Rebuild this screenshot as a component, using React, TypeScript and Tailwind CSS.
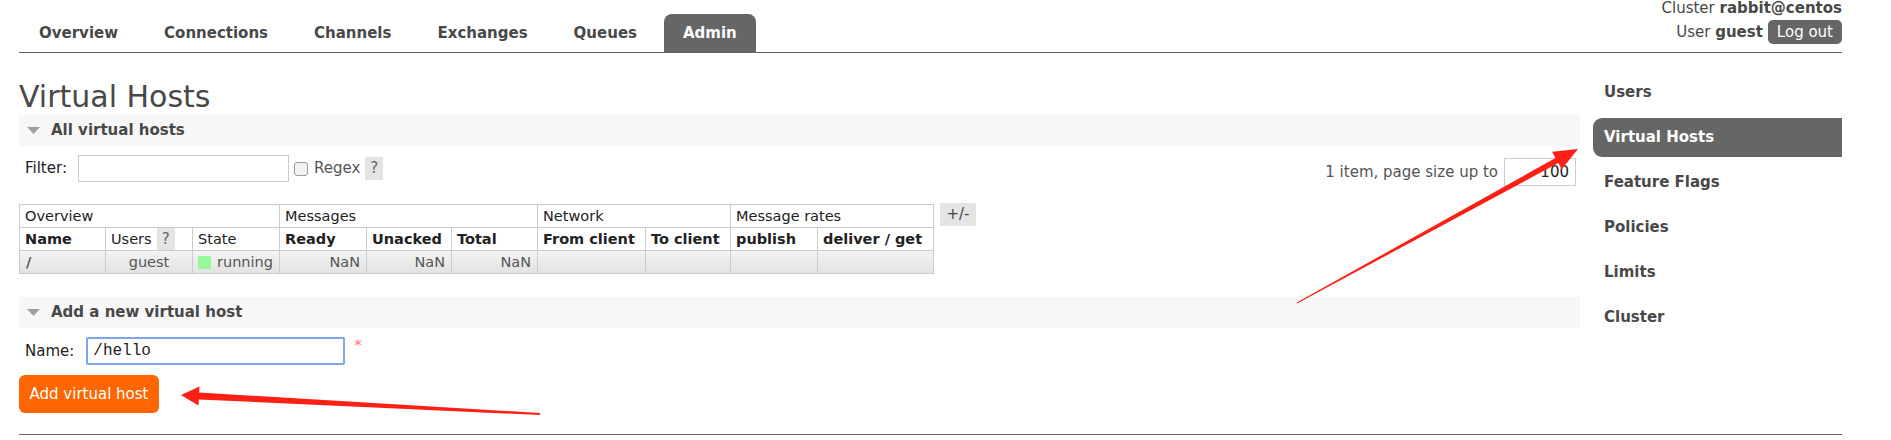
import React from "react";

const TABS = ["Overview", "Connections", "Channels", "Exchanges", "Queues", "Admin"];
const SIDE = ["Users", "Virtual Hosts", "Feature Flags", "Policies", "Limits", "Cluster"];

const TH = "border border-[#ccc] px-[5px] py-0 text-left leading-[20px] whitespace-nowrap";
const TD = "border border-[#ccc] px-[6px] py-0 leading-[20px] whitespace-nowrap text-[#555]";

function Band({ title }: { title: string }) {
  return (
    <div className="flex h-[31px] items-center bg-[#f7f7f7] pl-[8px]">
      <svg width="13" height="7" viewBox="0 0 13 7">
        <path d="M0 0h13L6.5 7z" fill="#a0a0a0" />
      </svg>
      <span className="ml-[11px] text-[15px] font-bold text-[#484848]">{title}</span>
    </div>
  );
}

function Help({ className = "" }: { className?: string }) {
  return (
    <span className={`flex w-[18px] items-center justify-center bg-[#e4e4e4] text-[15px] text-[#666] ${className}`}>?</span>
  );
}

function Arrows() {
  return (
    <svg className="pointer-events-none absolute left-0 top-0" width="1891" height="440" viewBox="0 0 1891 440">
      {/* arrow pointing at Virtual Hosts */}
      <polygon
        fill="#ff1f14"
        points="1296.8,302.6 1555.5,157.9 1552.1,151.7 1578,149 1561.7,169.3 1558.3,163.1 1297.2,303.4"
      />
      {/* arrow pointing at the button */}
      <polygon
        fill="#ff1f14"
        points="540,413 199.2,392.5 199.5,386.5 181,395 198.5,405.5 198.8,399.5 540,415"
      />
    </svg>
  );
}

export default function App() {
  return (
    <div className="relative h-[440px] w-[1891px] overflow-hidden bg-white font-['DejaVu_Sans',Verdana,sans-serif] text-[15px] text-[#484848]">
      <div className="ml-[19px] w-[1823px]">
        {/* Header */}
        <header className="flex h-[53px] justify-between border-b border-[#666]">
          <nav className="ml-[1px] flex items-end">
            {TABS.map((t) => (
              <div
                key={t}
                className={`mr-[8px] flex h-[38px] items-center rounded-t-[8px] px-[19px] text-[15px] font-bold ${
                  t === "Admin" ? "bg-[#666] text-white" : "text-[#484848]"
                }`}
              >
                {t}
              </div>
            ))}
          </nav>
          <div className="flex flex-col items-end">
            <div className="leading-[17px]">
              Cluster <b>rabbit@centos</b>
            </div>
            <div className="mt-[3px] flex items-center gap-[5px]">
              <span>
                User <b>guest</b>
              </span>
              <span className="h-[24px] rounded-[5px] bg-[#666] px-[9px] leading-[24px] text-white">Log out</span>
            </div>
          </div>
        </header>

        <div className="flex">
          {/* Main column */}
          <div className="w-[1561px]">
            <h1 className="mt-[26px] h-[36px] text-[30px] leading-[36px] font-normal text-[#484848]">Virtual Hosts</h1>
            <Band title="All virtual hosts" />

            <div className="mt-[9px] flex items-start justify-between">
              <div className="flex h-[27px] items-center">
                <span className="ml-[6px] text-[#222]">Filter:</span>
                <div className="ml-[11px] h-[27px] w-[211px] border border-[#ccc] bg-white" />
                <span className="ml-[5px] h-[14px] w-[14px] rounded-[3px] border border-[#999] bg-[#f2f2f2]" />
                <span className="ml-[6px] text-[#555]">Regex</span>
                <Help className="ml-[5px] h-[23px]" />
              </div>
              <div className="mr-[4px] mt-[3px] flex items-center">
                <span className="text-[#555]">1 item, page size up to</span>
                <div className="ml-[6px] h-[28px] w-[72px] border border-[#ccc] pr-[6px] text-right leading-[26px] text-[#222]">100</div>
              </div>
            </div>

            <div className="mt-[18px] flex items-start">
              <table className="table-fixed border-collapse text-[14.5px] text-[#222]">
                <colgroup>
                  <col className="w-[86px]" />
                  <col className="w-[87px]" />
                  <col className="w-[87px]" />
                  <col className="w-[87px]" />
                  <col className="w-[85px]" />
                  <col className="w-[86px]" />
                  <col className="w-[108px]" />
                  <col className="w-[85px]" />
                  <col className="w-[87px]" />
                  <col className="w-[116px]" />
                </colgroup>
                <thead>
                  <tr className="h-[23px]">
                    <th colSpan={3} className={`${TH} font-normal`}>Overview</th>
                    <th colSpan={3} className={`${TH} font-normal`}>Messages</th>
                    <th colSpan={2} className={`${TH} font-normal`}>Network</th>
                    <th colSpan={2} className={`${TH} font-normal`}>Message rates</th>
                  </tr>
                  <tr className="h-[23px]">
                    <th className={`${TH} font-bold`}>Name</th>
                    <th className="border border-[#ccc] p-0 text-left font-normal leading-[20px]">
                      <div className="flex h-[22px] items-center">
                        <span className="ml-[5px]">Users</span>
                        <Help className="ml-[5px] h-[22px]" />
                      </div>
                    </th>
                    <th className={`${TH} font-normal`}>State</th>
                    <th className={`${TH} font-bold`}>Ready</th>
                    <th className={`${TH} font-bold`}>Unacked</th>
                    <th className={`${TH} font-bold`}>Total</th>
                    <th className={`${TH} font-bold`}>From client</th>
                    <th className={`${TH} font-bold`}>To client</th>
                    <th className={`${TH} font-bold`}>publish</th>
                    <th className={`${TH} font-bold`}>deliver / get</th>
                  </tr>
                </thead>
                <tbody>
                  <tr className="h-[23px] bg-gradient-to-b from-[#f3f3f3] to-[#e2e2e2]">
                    <td className={`${TD} font-bold text-[#222]`}>/</td>
                    <td className={`${TD} text-center`}>guest</td>
                    <td className="border border-[#ccc] px-[5px] py-0 leading-[20px] text-[#555]">
                      <span className="flex items-center">
                        <span className="h-[13px] w-[13px] bg-[#98f898]" />
                        <span className="ml-[6px]">running</span>
                      </span>
                    </td>
                    <td className={`${TD} text-right`}>NaN</td>
                    <td className={`${TD} text-right`}>NaN</td>
                    <td className={`${TD} text-right`}>NaN</td>
                    <td className="border border-[#ccc]" />
                    <td className="border border-[#ccc]" />
                    <td className="border border-[#ccc]" />
                    <td className="border border-[#ccc]" />
                  </tr>
                </tbody>
              </table>
              <span className="ml-[6px] -mt-[1px] flex h-[23px] w-[36px] items-center justify-center bg-[#e4e4e4] text-[#444]">+/-</span>
            </div>

            <div className="mt-[23px]">
              <Band title="Add a new virtual host" />
            </div>

            <div className="mt-[9px] flex items-center">
              <span className="ml-[6px] text-[#222]">Name:</span>
              <div className="ml-[12px] flex h-[28px] w-[259px] items-center rounded-[2px] border-2 border-[#7da6ee] px-[5px] font-['Liberation_Mono','Courier_New',monospace] text-[16px] text-[#222]">
                /hello
              </div>
              <span className="ml-[9px] -mt-[10px] text-[15px] text-[#f77]">*</span>
            </div>

            <div className="mt-[10px] flex h-[38px] w-[140px] items-center justify-center rounded-[6px] bg-[#ff6600] text-white">
              Add virtual host
            </div>
          </div>

          {/* Sidebar */}
          <div className="ml-[13px] mt-[20px] w-[249px]">
            {SIDE.map((s) => (
              <div
                key={s}
                className={`mb-[6px] flex h-[39px] items-center pl-[11px] font-bold ${
                  s === "Virtual Hosts" ? "rounded-l-[9px] bg-[#666] text-white" : "text-[#484848]"
                }`}
              >
                {s}
              </div>
            ))}
          </div>
        </div>

        <div className="mt-[21px] border-t border-[#666]" />
      </div>
      <Arrows />
    </div>
  );
}
